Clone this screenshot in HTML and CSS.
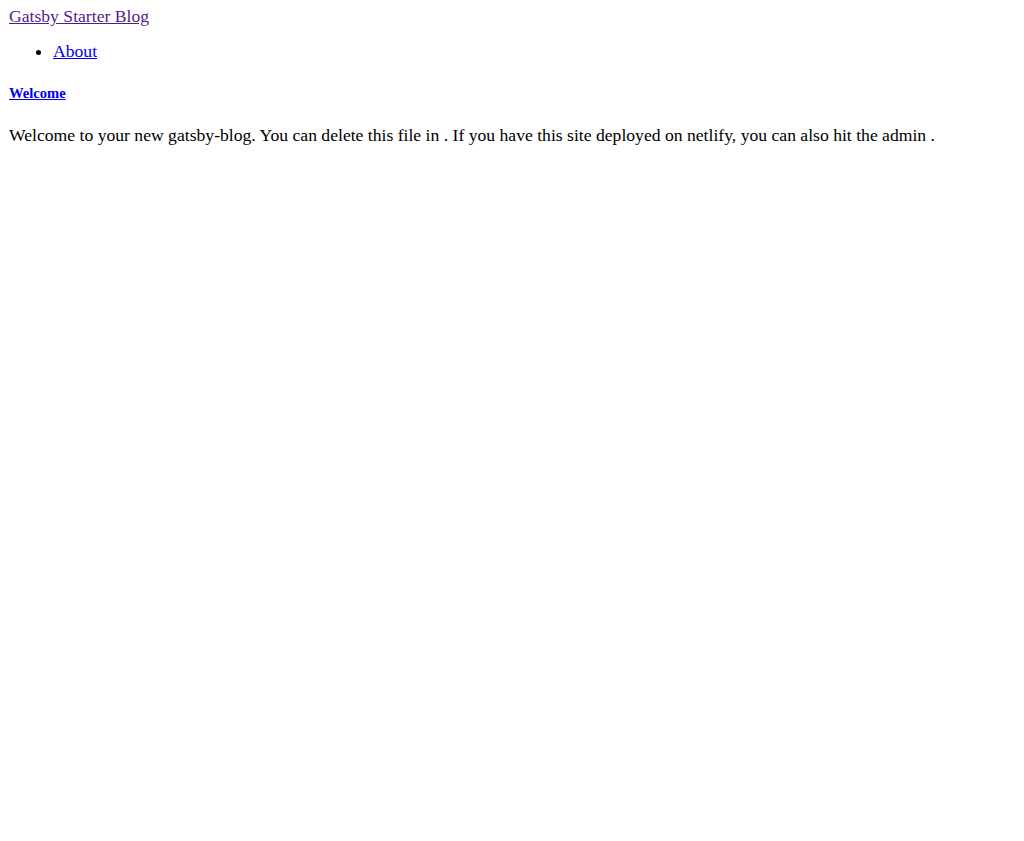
FILE: index.html
```html
<!DOCTYPE html>
<html lang="en">
<head>
<meta charset="utf-8">
<title>Gatsby Starter Blog</title>
<link rel="stylesheet" href="styles.css">
</head>
<body>
<div class="site">
  <header class="site-header">
    <a class="brand" href="#">Gatsby Starter Blog</a>
    <ul class="nav">
      <li><a class="nav-link" href="#">About</a></li>
    </ul>
  </header>
  <main class="content">
    <h5 class="post-title"><a class="post-link" href="#">Welcome</a></h5>
    <p class="post-text">Welcome to your new gatsby-blog. You can delete this file in . If you have this site deployed on netlify, you can also hit the admin .</p>
  </main>
</div>
</body>
</html>
```
FILE: styles.css
```css
body {
  margin: 6px 9px 9px;
  font-family: "Liberation Serif", "Times New Roman", serif;
  font-size: 17.64px;
  line-height: 1.15;
  color: #000;
  background: #fff;
}
a { color: #0000ee; }
.brand { color: #551a8b; }
.nav { margin: 15px 0 23px; padding-left: 44px; }
.post-title { font-size: 14.6px; margin: 0 0 24px; font-weight: bold; }
.post-text { margin: 0; }
```
